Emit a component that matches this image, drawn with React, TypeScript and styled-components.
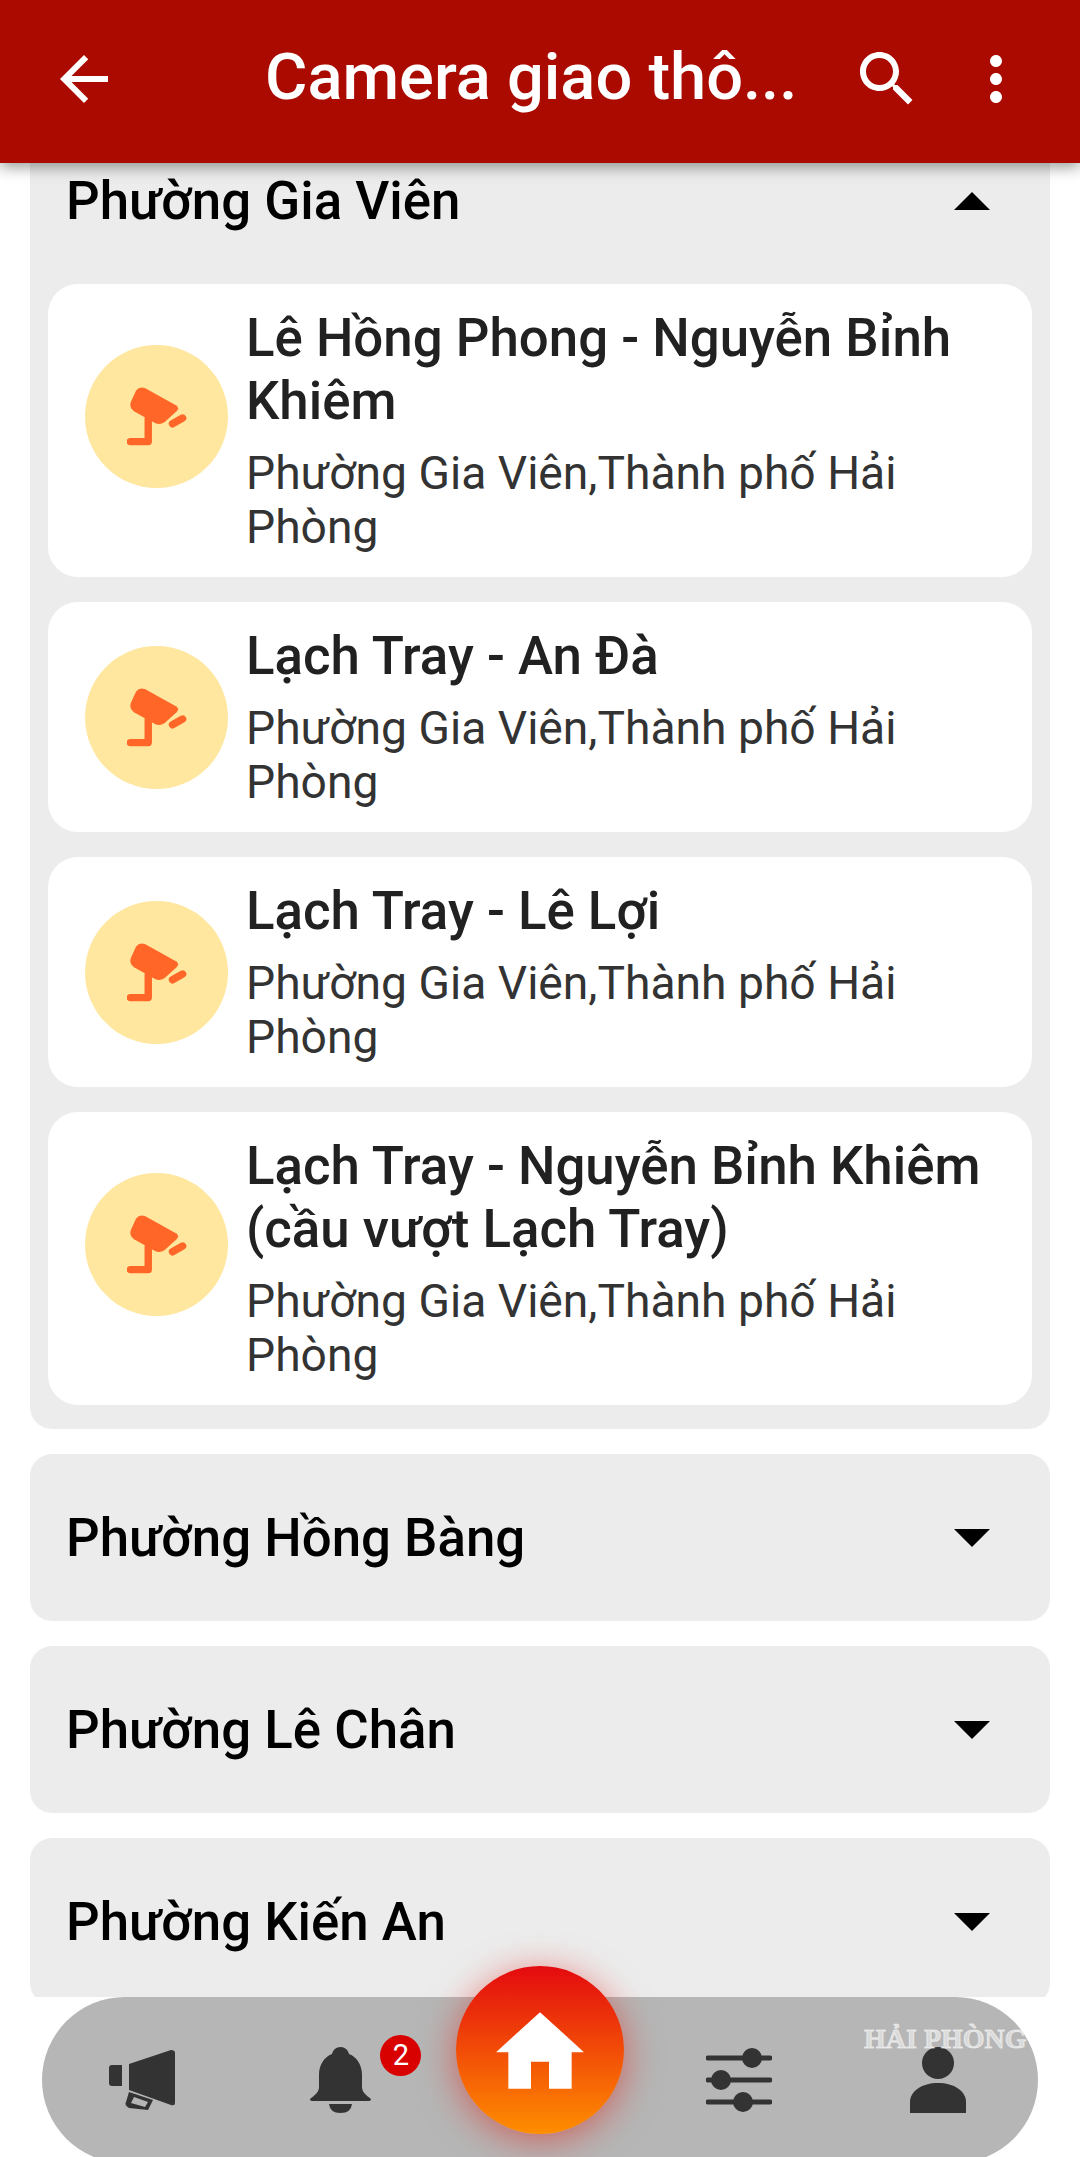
import React from 'react';
import styled, { createGlobalStyle } from 'styled-components';

const GlobalStyle = createGlobalStyle`
  html, body {
    margin: 0;
    padding: 0;
    background: #fff;
    font-family: Roboto, "Noto Sans", sans-serif;
  }
`;

const Screen = styled.div`
  display: flex;
  flex-direction: column;
  width: 1080px;
  height: 2157px;
  overflow: hidden;
`;

const TopBar = styled.header`
  position: relative;
  z-index: 2;
  flex-shrink: 0;
  display: flex;
  align-items: center;
  height: 163px;
  padding: 0 48px 6px 48px;
  box-sizing: border-box;
  background: #ab0a00;
  box-shadow: 0 4px 14px rgba(0, 0, 0, 0.4);
`;

const TopIcon = styled.svg`
  flex-shrink: 0;
  width: 72px;
  height: 72px;
  fill: #fff;
`;

const TopTitle = styled.h1`
  flex: 1;
  margin: 0 0 4px 145px;
  font-size: 65px;
  font-weight: 500;
  color: #fff;
  white-space: nowrap;
`;

const TopActions = styled.div`
  display: flex;
  gap: 37px;
`;

const Scroller = styled.main`
  flex: 1;
  min-height: 0;
  overflow: hidden;
`;

const List = styled.div`
  display: flex;
  flex-direction: column;
  gap: 25px;
  margin-top: -46px;
  padding: 0 30px;
`;

const Panel = styled.section`
  background: #ececec;
  border-radius: 22px;
`;

const PanelHead = styled.div`
  display: flex;
  align-items: center;
  justify-content: space-between;
  height: 167px;
  padding: 0 60px 0 36px;
`;

const PanelTitle = styled.h2`
  margin: 0;
  font-size: 52.8px;
  font-weight: 500;
  color: #000;
`;

const Caret = styled.span<{ $open?: boolean }>`
  width: 0;
  height: 0;
  border-left: 18px solid transparent;
  border-right: 18px solid transparent;
  ${(p) => (p.$open ? 'border-bottom: 18px solid #000;' : 'border-top: 18px solid #000;')}
`;

const Cards = styled.div`
  display: flex;
  flex-direction: column;
  gap: 25px;
  padding: 0 18px 24px;
`;

const Card = styled.article`
  display: flex;
  align-items: center;
  gap: 18px;
  padding: 23px 30px 23px 37px;
  background: #fff;
  border-radius: 30px;
`;

const Avatar = styled.div<{ $raised?: boolean }>`
  flex-shrink: 0;
  display: flex;
  align-items: center;
  justify-content: center;
  width: 143px;
  height: 143px;
  margin-bottom: ${(p) => (p.$raised ? '28px' : '0')};
  border-radius: 50%;
  background: #ffe7a0;
`;

const CardBody = styled.div`
  min-width: 0;
`;

const CardTitle = styled.div`
  font-size: 52.8px;
  font-weight: 500;
  line-height: 63px;
  color: #212121;
`;

const CardSub = styled.div`
  margin-top: 13px;
  font-size: 46.2px;
  line-height: 54px;
  color: #333;
`;

const NavBar = styled.nav`
  position: relative;
  flex-shrink: 0;
  display: grid;
  grid-template-columns: repeat(5, 1fr);
  align-items: center;
  justify-items: center;
  height: 166px;
  margin: 0 42px -6px;
  border-radius: 83px;
  background: #b6b6b6;
`;

const NavIcon = styled.svg`
  display: block;
  fill: #333;
`;

const NavSlot = styled.div`
  position: relative;
  display: flex;
`;

const Badge = styled.span`
  position: absolute;
  top: -12px;
  right: -50px;
  width: 41px;
  height: 41px;
  border-radius: 50%;
  background: #d90000;
  color: #fff;
  font-size: 29px;
  line-height: 41px;
  text-align: center;
`;

const HomeButton = styled.button`
  position: absolute;
  left: 414px;
  top: -31px;
  display: flex;
  align-items: center;
  justify-content: center;
  width: 168px;
  height: 168px;
  padding: 0;
  border: 0;
  border-radius: 50%;
  background: linear-gradient(180deg, #e40a0f 0%, #ff8e00 100%);
  box-shadow: 0 6px 36px rgba(224, 30, 20, 0.55);
`;

const Watermark = styled.span`
  position: absolute;
  top: 26px;
  left: 822px;
  font-family: "Liberation Serif", serif;
  font-size: 28px;
  font-weight: 700;
  white-space: nowrap;
  color: rgba(255, 255, 255, 0.5);
  -webkit-text-stroke: 1px rgba(255, 255, 255, 0.55);
`;

type Spot = { title: string; twoLines?: boolean };

const spots: Spot[] = [
  { title: 'Lê Hồng Phong - Nguyễn Bỉnh Khiêm', twoLines: true },
  { title: 'Lạch Tray - An Đà' },
  { title: 'Lạch Tray - Lê Lợi' },
  { title: 'Lạch Tray - Nguyễn Bỉnh Khiêm (cầu vượt Lạch Tray)', twoLines: true },
];

const closedPanels = ['Phường Hồng Bàng', 'Phường Lê Chân', 'Phường Kiến An'];

const CameraIcon = () => (
  <svg width="60" height="59" viewBox="235 200 178 175">
    <path
      d="M262 210 Q272 197 288 203 L380 254 Q392 262 382 272 L347 304 Q332 314 318 307 L256 272 Q240 260 247 243 Z"
      fill="#ff6627"
    />
    <path d="M298 295 V362 H245" fill="none" stroke="#ff6627" strokeWidth="22" strokeLinecap="round" strokeLinejoin="round" />
    <path d="M370 309 L400 292" fill="none" stroke="#ff6627" strokeWidth="22" strokeLinecap="round" />
  </svg>
);

const App: React.FC = () => {
  return (
    <Screen>
      <GlobalStyle />
      <TopBar>
        <TopIcon viewBox="0 0 24 24">
          <path d="M20 11H7.83l5.59-5.59L12 4l-8 8 8 8 1.41-1.41L7.83 13H20v-2z" />
        </TopIcon>
        <TopTitle>Camera giao thô...</TopTitle>
        <TopActions>
          <TopIcon viewBox="0 0 24 24">
            <path d="M15.5 14h-.79l-.28-.27C15.41 12.59 16 11.11 16 9.5 16 5.91 13.09 3 9.5 3S3 5.91 3 9.5 5.91 16 9.5 16c1.61 0 3.09-.59 4.23-1.57l.27.28v.79l5 4.99L20.49 19l-4.99-5zm-6 0C7.01 14 5 11.99 5 9.5S7.01 5 9.5 5 14 7.01 14 9.5 11.99 14 9.5 14z" />
          </TopIcon>
          <TopIcon viewBox="0 0 24 24">
            <path d="M12 8c1.1 0 2-.9 2-2s-.9-2-2-2-2 .9-2 2 .9 2 2 2zm0 2c-1.1 0-2 .9-2 2s.9 2 2 2 2-.9 2-2-.9-2-2-2zm0 6c-1.1 0-2 .9-2 2s.9 2 2 2 2-.9 2-2-.9-2-2-2z" />
          </TopIcon>
        </TopActions>
      </TopBar>

      <Scroller>
        <List>
          <Panel>
            <PanelHead>
              <PanelTitle>Phường Gia Viên</PanelTitle>
              <Caret $open />
            </PanelHead>
            <Cards>
              {spots.map((spot) => (
                <Card key={spot.title}>
                  <Avatar $raised={spot.twoLines}>
                    <CameraIcon />
                  </Avatar>
                  <CardBody>
                    <CardTitle>{spot.title}</CardTitle>
                    <CardSub>Phường Gia Viên,Thành phố Hải Phòng</CardSub>
                  </CardBody>
                </Card>
              ))}
            </Cards>
          </Panel>
          {closedPanels.map((name) => (
            <Panel key={name}>
              <PanelHead>
                <PanelTitle>{name}</PanelTitle>
                <Caret />
              </PanelHead>
            </Panel>
          ))}
        </List>
      </Scroller>

      <NavBar>
        <NavSlot>
          <NavIcon width="66" height="60" viewBox="0 0 66 60">
            <path d="M3 15 H13 V36 H3 Q0 36 0 33 V18 Q0 15 3 15 Z" />
            <path d="M20 14 L62 0 Q66 0 66 3 V53 Q66 56 62 55 L20 40 Z" />
            <path
              fillRule="evenodd"
              d="M20 42 L44 50 L39 60 L20 58 Q15 55 17 52 Z M25 47 L22 53 L36 57 L39 52 Z"
            />
          </NavIcon>
        </NavSlot>
        <NavSlot>
          <NavIcon width="61" height="66" viewBox="0 0 61 66">
            <path d="M30.5 0 C35 0 38 3 39 7 C47 10 52 18 52 28 V40 C52 45 56 48 61 52 Q61 54 58 54 H3 Q0 54 0 52 C5 48 9 45 9 40 V28 C9 18 14 10 22 7 C23 3 26 0 30.5 0 Z" />
            <path d="M19 57 H42 Q41 66 30.5 66 Q20 66 19 57 Z" />
          </NavIcon>
          <Badge>2</Badge>
        </NavSlot>
        <span />
        <NavSlot>
          <NavIcon width="66" height="65" viewBox="0 0 66 65">
            <g fill="none" stroke="#333" strokeWidth="5" strokeLinecap="round">
              <path d="M2 10 H64" />
              <path d="M2 32 H64" />
              <path d="M2 54 H64" />
            </g>
            <circle cx="46" cy="10" r="10" />
            <circle cx="15" cy="32" r="10" />
            <circle cx="37" cy="54" r="10" />
          </NavIcon>
        </NavSlot>
        <NavSlot>
          <NavIcon width="56" height="66" viewBox="0 0 56 66">
            <ellipse cx="28" cy="16" rx="16" ry="16" />
            <path d="M0 66 V55 C0 44 12 36 28 36 C44 36 56 44 56 55 V66 Z" />
          </NavIcon>
        </NavSlot>
        <HomeButton aria-label="Trang chủ">
          <svg width="88" height="77" viewBox="0 0 264 230" fill="#fff">
            <path d="M132 0 L264 120 H227 V230 H159 V149 H105 V230 H37 V120 H0 Z" />
          </svg>
        </HomeButton>
        <Watermark>HẢI PHÒNG</Watermark>
      </NavBar>
    </Screen>
  );
};

export default App;
